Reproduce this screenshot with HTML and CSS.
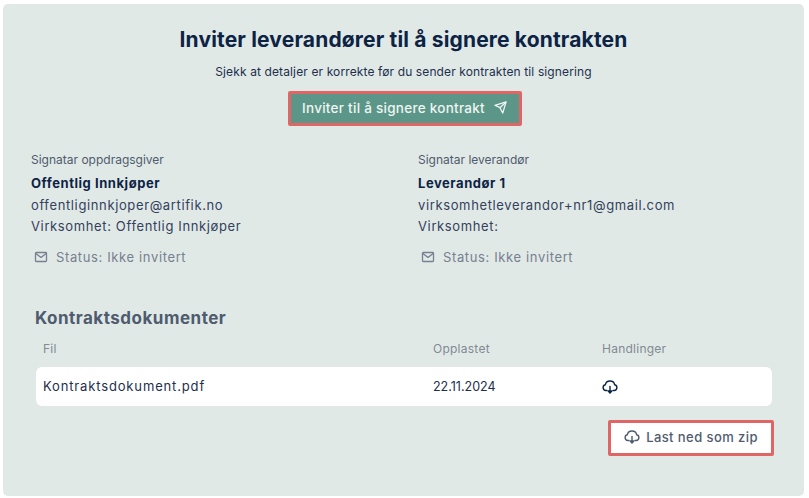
FILE: index.html
```html
<!DOCTYPE html>
<html lang="nb">
<head>
    <meta charset="UTF-8">
    <title>Inviter leverandører</title>
    <link rel="stylesheet" href="styles.css">
</head>
<body>
    <div class="panel">
        <h1 class="title">Inviter leverandører til å signere kontrakten</h1>
        <p class="subtitle">Sjekk at detaljer er korrekte før du sender kontrakten til signering</p>
        <div class="invite-row">
            <button class="invite-button">
                Inviter til å signere kontrakt
                <svg class="send-icon" width="13" height="13" viewBox="0 0 14 14" fill="none" stroke="currentColor" stroke-width="1.4" stroke-linejoin="round"><path d="M13 1 1 4.6l5.4 2.6L9.4 13z"/><path d="M13 1 6.4 7.2"/></svg>
            </button>
        </div>

        <div class="signers">
            <div class="signer">
                <div class="signer-label">Signatar oppdragsgiver</div>
                <div class="signer-name">Offentlig Innkjøper</div>
                <div class="signer-line">offentliginnkjoper@artifik.no</div>
                <div class="signer-line">Virksomhet: Offentlig Innkjøper</div>
                <div class="status">
                    <svg width="14" height="14" viewBox="0 0 14 14" fill="none" stroke="currentColor" stroke-width="1.3" stroke-linejoin="round"><rect x="1.5" y="2.5" width="11" height="9" rx="0.8"/><path d="m1.8 3.4 5.2 4 5.2-4"/></svg>
                    Status: Ikke invitert
                </div>
            </div>
            <div class="signer">
                <div class="signer-label">Signatar leverandør</div>
                <div class="signer-name">Leverandør 1</div>
                <div class="signer-line">virksomhetleverandor+nr1@gmail.com</div>
                <div class="signer-line">Virksomhet:</div>
                <div class="status">
                    <svg width="14" height="14" viewBox="0 0 14 14" fill="none" stroke="currentColor" stroke-width="1.3" stroke-linejoin="round"><rect x="1.5" y="2.5" width="11" height="9" rx="0.8"/><path d="m1.8 3.4 5.2 4 5.2-4"/></svg>
                    Status: Ikke invitert
                </div>
            </div>
        </div>

        <h2 class="docs-title">Kontraktsdokumenter</h2>
        <div class="docs-head">
            <span>Fil</span>
            <span>Opplastet</span>
            <span>Handlinger</span>
        </div>
        <div class="docs-row">
            <span class="file-name">Kontraktsdokument.pdf</span>
            <span class="file-date">22.11.2024</span>
            <span class="file-action">
                <svg width="16" height="16" viewBox="0 0 16 16" fill="none" stroke="currentColor" stroke-width="1.4" stroke-linecap="round" stroke-linejoin="round"><path d="M5 11.5H3.8a2.9 2.9 0 0 1-.5-5.7 4.8 4.8 0 0 1 9.4 0 2.9 2.9 0 0 1-.5 5.7H11"/><path d="M8 7.5v6"/><path d="m6.2 12 1.8 2 1.8-2z" fill="currentColor"/></svg>
            </span>
        </div>
        <div class="zip-row">
            <button class="zip-button">
                <svg width="16" height="16" viewBox="0 0 16 16" fill="none" stroke="currentColor" stroke-width="1.4" stroke-linecap="round" stroke-linejoin="round"><path d="M5 11.5H3.8a2.9 2.9 0 0 1-.5-5.7 4.8 4.8 0 0 1 9.4 0 2.9 2.9 0 0 1-.5 5.7H11"/><path d="M8 7.5v6"/><path d="m6.2 12 1.8 2 1.8-2z" fill="currentColor"/></svg>
                Last ned som zip
            </button>
        </div>
    </div>
</body>
</html>
```

FILE: styles.css
```css
body {
    margin: 0;
    background-color: #fff;
    font-family: Inter, "Liberation Sans", sans-serif;
    color: #33415c;
}
.panel {
    width: 801px;
    height: 492px;
    margin: 4px 0 0 3px;
    padding-top: 24px;
    box-sizing: border-box;
    background-color: #e1e9e7;
    border-radius: 5px;
    overflow: hidden;
}
.title {
    margin: 0;
    text-align: center;
    font-size: 21px;
    line-height: 24px;
    font-weight: 700;
    letter-spacing: 0.16px;
    color: #0d2344;
}
.subtitle {
    margin: 12px 0 0;
    text-align: center;
    font-size: 12px;
    line-height: 16px;
    letter-spacing: 0.12px;
    color: #1d2f4d;
}
.invite-row {
    display: flex;
    justify-content: center;
    margin-top: 11px;
    padding-left: 2px;
}
.invite-button {
    display: flex;
    align-items: center;
    gap: 9px;
    height: 35px;
    width: 234px;
    padding: 0 0 2px;
    justify-content: center;
    box-sizing: border-box;
    border: 3px solid #e06666;
    border-radius: 2px;
    background-color: #5c9688;
    color: #eef5f2;
    font-family: inherit;
    font-size: 13.5px;
    font-weight: 500;
    letter-spacing: 0.27px;
}
.signers {
    display: grid;
    grid-template-columns: 387px 1fr;
    margin-top: 26px;
    padding-left: 28px;
}
.signer-label {
    font-size: 12px;
    line-height: 16px;
    color: #4f5b6e;
}
.signer-name {
    margin-top: 7px;
    font-size: 13px;
    line-height: 17px;
    font-weight: 700;
    letter-spacing: 0.55px;
    color: #0d2344;
}
.signer-line {
    margin-top: 5px;
    font-size: 13px;
    line-height: 16px;
    letter-spacing: 0.63px;
}
.status {
    display: flex;
    align-items: center;
    gap: 8px;
    margin-top: 15px;
    padding-left: 3px;
    font-size: 13px;
    line-height: 16px;
    letter-spacing: 0.63px;
    color: #76808f;
}
.docs-title {
    margin: 43px 0 0 32px;
    font-size: 17px;
    line-height: 20px;
    font-weight: 700;
    letter-spacing: 0.5px;
    color: #4f5b6e;
}
.docs-head {
    display: grid;
    grid-template-columns: 390px 169px 1fr;
    margin: 13px 0 0 40px;
    font-size: 12px;
    line-height: 16px;
    letter-spacing: 0.25px;
    color: #828a94;
}
.docs-row {
    display: grid;
    grid-template-columns: 390px 169px 1fr;
    align-items: center;
    width: 736px;
    height: 39px;
    margin: 10px 0 0 33px;
    padding-left: 7px;
    box-sizing: border-box;
    background-color: #fff;
    border-radius: 6px;
    font-size: 13px;
    color: #1d2f4d;
}
.file-name {
    letter-spacing: 0.85px;
    margin-top: -2px;
}
.file-date {
    font-size: 12.5px;
}
.file-action {
    display: flex;
    color: #0d2344;
}
.zip-row {
    display: flex;
    justify-content: flex-end;
    width: 771px;
    margin-top: 14px;
}
.zip-button {
    display: flex;
    align-items: center;
    justify-content: center;
    gap: 6px;
    width: 166px;
    height: 36px;
    padding: 0 0 2px;
    box-sizing: border-box;
    border: 3px solid #e06666;
    border-radius: 2px;
    background-color: #fff;
    color: #4f5b6e;
    font-family: inherit;
    font-size: 13px;
    font-weight: 500;
    letter-spacing: 0.42px;
}
```
